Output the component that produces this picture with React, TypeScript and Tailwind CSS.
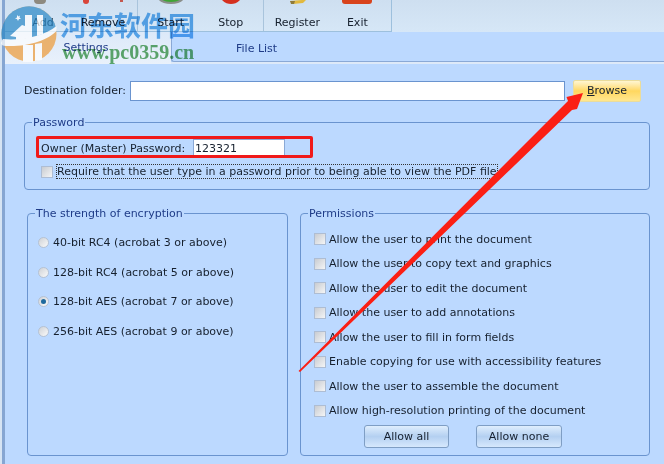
import React from "react";

const font = { fontFamily: '"DejaVu Sans", sans-serif' };

function Tool({ label, icon }: { label: string; icon?: React.ReactNode }) {
  return (
    <div className="flex w-[60px] flex-col items-center">
      <div className="flex h-[16px] w-full items-end justify-center overflow-hidden pb-[12px]">{icon}</div>
      <span className="text-[11px] leading-[14px] text-[#16202e]">{label}</span>
    </div>
  );
}

function Box() {
  return (
    <span className="flex h-[12px] w-[12px] shrink-0 items-center justify-center border border-[#aebdd3] bg-[#f2f4f7]">
      <span className="h-[10px] w-[10px] bg-gradient-to-br from-[#c9ccd1] to-[#f4f5f6]" />
    </span>
  );
}

function Radio({ on, label }: { on?: boolean; label: string }) {
  return (
    <div className="flex h-[29.6px] items-center gap-[4px]">
      <span className="flex h-[11px] w-[11px] shrink-0 items-center justify-center rounded-full border border-[#b6c2d2] bg-gradient-to-br from-[#cfd2d6] to-[#fafafa]">
        {on && <span className="h-[5px] w-[5px] rounded-full bg-[#1f6a9e]" />}
      </span>
      <span className="pt-[1px] text-[11px] text-[#16202e]">{label}</span>
    </div>
  );
}

const perms = [
  "Allow the user to print the document",
  "Allow the user to copy text and graphics",
  "Allow the user to edit the document",
  "Allow the user to add annotations",
  "Allow the user to fill in form fields",
  "Enable copying for use with accessibility features",
  "Allow the user to assemble the document",
  "Allow high-resolution printing of the document",
];

function Group({ title, className, children }: { title: string; className: string; children: React.ReactNode }) {
  return (
    <fieldset className={"rounded-[4px] border border-[#6a94cf] " + className}>
      <legend className="ml-[7px] px-[1px] pt-[1px] text-[11px] leading-[14px] text-[#1f3c88]">{title}</legend>
      {children}
    </fieldset>
  );
}

function SmallButton({ label, className }: { label: string; className: string }) {
  return (
    <button className={"h-[23px] rounded-[3px] border border-[#7f9ec4] bg-gradient-to-b from-[#dfeefd] via-[#b4d0f1] to-[#d6e8fd] pt-[1px] text-[11px] text-[#16202e] " + className}>
      {label}
    </button>
  );
}

export default function App() {
  return (
    <div style={font} className="relative flex h-[464px] w-[664px] overflow-hidden bg-[#bcd9ff]">
      <div className="flex w-[5px] shrink-0">
        <div className="w-[2px] bg-[#d6e4f3]" />
        <div className="w-[3px] bg-[#86a6d2]" />
      </div>

      <div className="flex min-w-0 flex-1 flex-col">
        {/* toolbar */}
        <div className="flex h-[32px] shrink-0 bg-gradient-to-b from-[#cedff0] to-[#d6e7f7]">
          <div className="flex w-[387px] border-r border-b border-[#9dc0dd]">
            <div className="flex w-[133px] border-r border-[#a9c4dc] pl-[8px]">
              <Tool label="Add" icon={<span className="ml-[-6px] h-[4px] w-[12px] rounded-b bg-[#8d8a80]" />} />
              <Tool
                label="Remove"
                icon={
                  <span className="flex w-[40px] items-start justify-between">
                    <span className="h-[4px] w-[6px] rounded-b-full bg-[#d9453a]" />
                    <span className="h-[2px] w-[3px] bg-[#c4584f]" />
                  </span>
                }
              />
            </div>
            <div className="flex w-[127px] border-r border-[#a9c4dc] pl-[3px]">
              <Tool
                label="Start"
                icon={
                  <svg className="shrink-0" width="28" height="5" viewBox="0 0 28 5">
                    <path d="M1 0C3 3 8 5 14 5C20 5 25 3 27 0Z" fill="#8b8f8b" />
                    <path d="M4 0C6 2 10 3 14 3C18 3 22 2 24 0Z" fill="#3fa535" />
                  </svg>
                }
              />
              <Tool
                label="Stop"
                icon={
                  <svg className="shrink-0" width="18" height="4" viewBox="0 0 18 4">
                    <path d="M0 0C3 3 6 4 9 4C12 4 15 3 18 0Z" fill="#d5301f" />
                  </svg>
                }
              />
            </div>
            <div className="flex w-[127px] pl-[3px]">
              <Tool
                label="Register"
                icon={
                  <svg className="shrink-0" width="18" height="4" viewBox="0 0 18 4">
                    <path d="M2 1L14 0L18 0L15 3L5 4Z" fill="#e2b93e" />
                    <path d="M2 1L7 1L6 4L3 4Z" fill="#8f7a3a" />
                  </svg>
                }
              />
              <Tool label="Exit" icon={<span className="h-[4px] w-[30px] rounded-b-[3px] bg-[#d8431c]" />} />
            </div>
          </div>
        </div>

        {/* tabs */}
        <div className="flex h-[32px] shrink-0">
          <div className="flex w-[166px] items-center justify-center bg-gradient-to-b from-[#dce9f9] to-[#e9f1fb] pr-[4px] pt-[1px] text-[11px] text-[#1f3c88]">
            Settings
          </div>
          <div className="flex flex-1 flex-col">
            <div className="flex h-[30px] items-center rounded-bl-[3px] border-b border-l border-[#8aa9d6] pl-[64px] pt-[5px] text-[11px] text-[#1f3c88]">
              File List
            </div>
            <div className="h-[2px] bg-[#dde9f8]" />
          </div>
        </div>

        {/* settings page */}
        <div className="flex min-h-0 flex-1 flex-col pl-[19px] pr-[14px] pt-[16px]">
          <div className="flex h-[21px] items-center">
            <span className="w-[106px] pt-[1px] text-[11px] text-[#16202e]">Destination folder:</span>
            <div className="h-[20px] w-[435px] border border-[#6a94cf] bg-white" />
            <button className="ml-[8px] h-[22px] w-[68px] rounded-[2px] border border-[#eadc9c] bg-gradient-to-b from-[#fff6d0] via-[#ffd75e] to-[#ffe78f] pt-[1px] text-[11px] text-[#16202e]">
              <span className="underline">B</span>rowse
            </button>
          </div>

          <Group title="Password" className="mt-[14px] h-[75px]">
            <div className="mt-[9px] flex h-[19px] items-center pl-[16px]">
              <span className="w-[152px] pt-[1px] text-[11px] text-[#16202e]">Owner (Master) Password:</span>
              <div className="flex h-[19px] w-[92px] items-center border border-[#8aa9d6] bg-white pl-[1px] pt-[1px] text-[11px] text-[#16202e]">123321</div>
            </div>
            <div className="mt-[6px] flex items-center gap-[3px] pl-[16px]">
              <Box />
              <span className="border border-dotted border-[#333] text-[11px] leading-[13px] text-[#16202e]">
                Require that the user type in a password prior to being able to view the PDF file
              </span>
            </div>
          </Group>

          <div className="mt-[16px] flex gap-[12px]">
            <Group title="The strength of encryption" className="ml-[3px] h-[250px] w-[261px]">
              <div className="pl-[10px] pt-[7px]">
                {["40-bit RC4 (acrobat 3 or above)", "128-bit RC4 (acrobat 5 or above)", "128-bit AES (acrobat 7 or above)", "256-bit AES (acrobat 9 or above)"].map((t, i) => (
                  <Radio key={t} label={t} on={i === 2} />
                ))}
              </div>
            </Group>
            <Group title="Permissions" className="h-[250px] w-[350px]">
              <div className="pl-[13px] pt-[6px]">
                {perms.map((t) => (
                  <div key={t} className="flex h-[24.5px] items-center gap-[3px]">
                    <Box />
                    <span className="pt-[1px] text-[11px] text-[#16202e]">{t}</span>
                  </div>
                ))}
                <div className="mt-[2px] flex gap-[27px] pl-[50px]">
                  <SmallButton label="Allow all" className="w-[85px]" />
                  <SmallButton label="Allow none" className="w-[86px]" />
                </div>
              </div>
            </Group>
          </div>
        </div>
      </div>

      {/* annotation overlays */}
      <div className="absolute left-[36px] top-[136px] h-[22px] w-[277px] rounded-[2px] border-[3px] border-[#f01a1a]" />
      <svg className="absolute left-0 top-0" width="664" height="464" viewBox="0 0 664 464">
        <polygon points="298.5,371 568,101 566.5,97 583,93 577,109 572,110 300,372" fill="#fb1f14" />
      </svg>

      {/* watermark */}
      <svg className="absolute left-0 top-0 opacity-70" width="60" height="64" viewBox="0 0 60 64">
        <circle cx="29" cy="34" r="27.5" fill="#ee9a35" />
        <path d="M2 40A27.5 27.5 0 0 1 56 28C46 36 22 41 2 40Z" fill="#2a88c6" />
        <path d="M1 43C2 41 2 40 3 39C20 41 45 36 56.5 26L56.5 31C48 40 28 47 6 46C3 46 1 45 1 43Z" fill="#ffffff" />
        <path d="M10 36L22 25L25 26L25 15L32 15L32 38L16 40L16 37Z" fill="#ffffff" />
        <path d="M37 15L43 15L43 34L37 36Z" fill="#ffffff" />
        <path d="M23 45L33 45L33 62L23 62Z M35 44L42 43L42 60L35 61Z" fill="#ffffff" />
        <path d="M17 15L18.5 16.5L20 15.5L19.5 17.5L21 19L19 19L18 21L17 19L15 18.5L17 17.5Z" fill="#ffffff" />
      </svg>
      <div
        style={{ fontFamily: '"Noto Sans CJK SC", sans-serif' }}
        className="absolute left-[60px] top-[6px] text-[27px] font-bold leading-[38px] text-[#62b0ec] mix-blend-multiply"
      >
        河东软件园
      </div>
      <div
        style={{ fontFamily: '"Liberation Serif", serif' }}
        className="absolute left-[62px] top-[40px] text-[20px] font-bold leading-[24px] text-[#62ad6c] mix-blend-multiply"
      >
        www.pc0359.cn
      </div>
    </div>
  );
}
